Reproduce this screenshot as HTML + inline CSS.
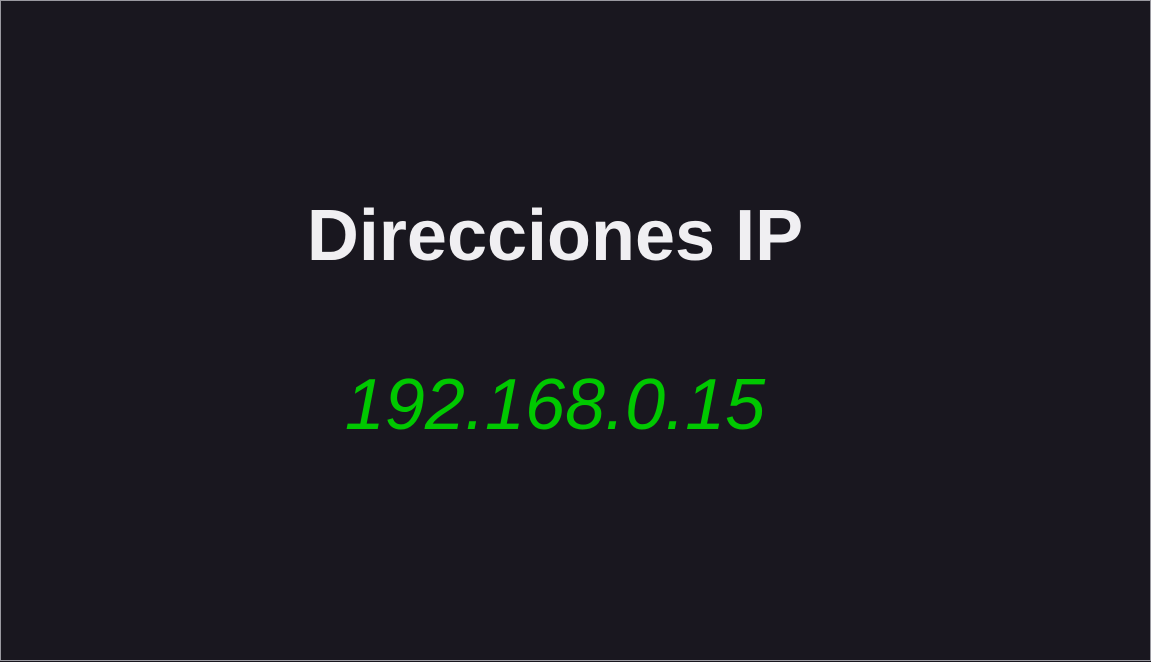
<!DOCTYPE html>
<html><head><style>
html,body{margin:0;padding:0;background:#19171f;}
.box{position:absolute;left:0;top:0;width:1149px;height:659px;border:1px solid #9a99a0;background:#19171f;}
.t{position:absolute;left:0;width:1110px;text-align:center;font-family:"Liberation Sans",sans-serif;font-size:72px;line-height:1;white-space:nowrap;}
.h{top:200px;font-weight:bold;color:#f0eff2;}
.ip{top:369px;font-style:italic;color:#00c800;}
</style></head><body>
<div class="box"></div>
<div class="t h">Direcciones IP</div>
<div class="t ip">192.168.0.15</div>
</body></html>
